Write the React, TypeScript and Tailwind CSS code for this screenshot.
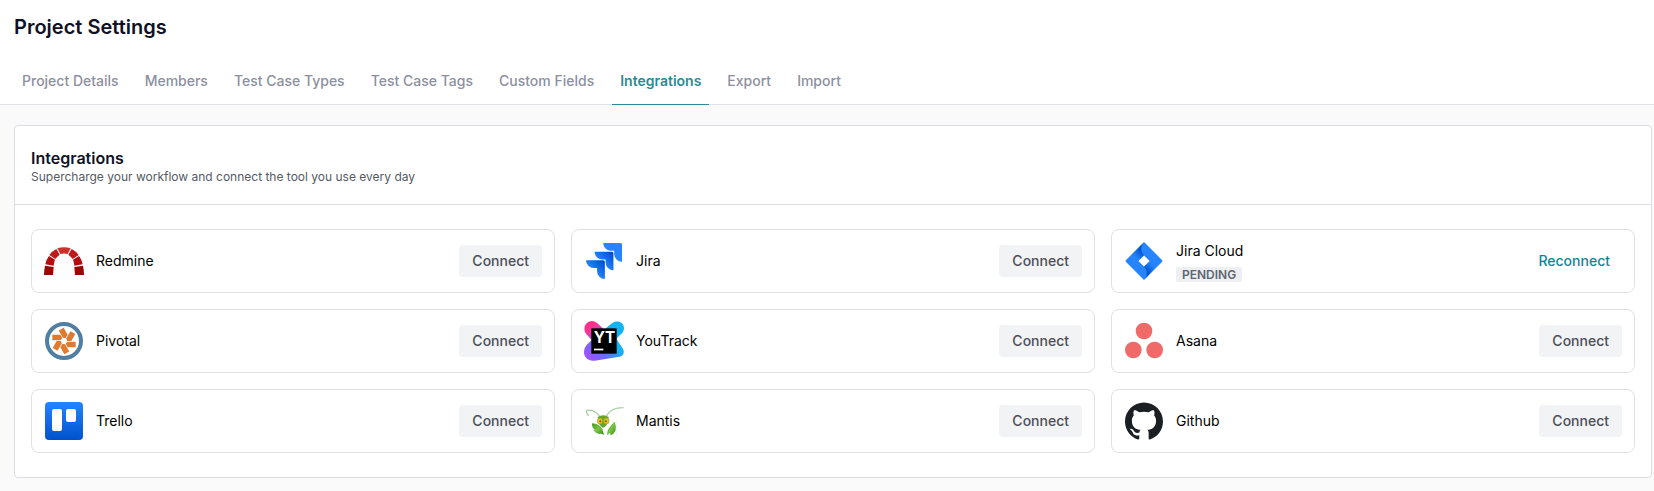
import { ReactNode } from "react";
import { SiGithub } from "react-icons/si";

const tabs = [
    "Project Details",
    "Members",
    "Test Case Types",
    "Test Case Tags",
    "Custom Fields",
    "Integrations",
    "Export",
    "Import",
];

const RedmineIcon = () => (
    <svg viewBox="0 0 120 120" className="size-10">
        <path fill="#cf2f2b" d="M40 22Q60 16 80 22L71 39Q60 36 49 39Z" />
        <path fill="#c11a1a" d="M37 24L47 41Q40 46 34 54L16 42Q25 30 37 24Z" />
        <path fill="#c11a1a" d="M83 24L73 41Q80 46 86 54L104 42Q95 30 83 24Z" />
        <path fill="#b30d0d" d="M15 45L33 56Q30 65 29 74L4 70Q7 55 15 45Z" />
        <path fill="#b30d0d" d="M105 45L87 56Q90 65 91 74L116 70Q113 55 105 45Z" />
        <path fill="#9c0303" d="M3 74L29 78Q28 90 27 102H0Q0 87 3 74Z" />
        <path fill="#9c0303" d="M117 74L91 78Q92 90 93 102H120Q120 87 117 74Z" />
    </svg>
);

const JiraIcon = () => (
    <svg viewBox="0 0 24 24" className="size-9">
        <defs>
            <linearGradient id="jira-mid" x1="0.95" y1="0.05" x2="0.4" y2="0.6">
                <stop offset="0.1" stopColor="#0052cc" />
                <stop offset="1" stopColor="#2684ff" />
            </linearGradient>
        </defs>
        <path
            fill="#2684ff"
            d="M23.013 0H11.455a5.215 5.215 0 0 0 5.215 5.215h2.129v2.057A5.215 5.215 0 0 0 24 12.483V1.005A1.001 1.001 0 0 0 23.013 0Z"
        />
        <path
            fill="url(#jira-mid)"
            d="M17.294 5.757H5.736a5.215 5.215 0 0 0 5.215 5.214h2.129v2.058a5.218 5.218 0 0 0 5.215 5.214V6.758a1.001 1.001 0 0 0-1.001-1.001z"
        />
        <path
            fill="url(#jira-mid)"
            d="M11.571 11.513H0a5.218 5.218 0 0 0 5.232 5.215h2.13v2.057A5.215 5.215 0 0 0 12.575 24V12.518a1.005 1.005 0 0 0-1.005-1.005z"
        />
    </svg>
);

const JiraCloudIcon = () => (
    <svg viewBox="0 0 24 24" className="size-[38px]">
        <defs>
            <linearGradient id="cloud-top" gradientUnits="userSpaceOnUse" x1="11.4" y1="4.5" x2="6.5" y2="9.5">
                <stop offset="0.18" stopColor="#0052cc" />
                <stop offset="1" stopColor="#2684ff" />
            </linearGradient>
            <linearGradient id="cloud-bottom" gradientUnits="userSpaceOnUse" x1="12.6" y1="19.5" x2="17.5" y2="14.5">
                <stop offset="0.18" stopColor="#0052cc" />
                <stop offset="1" stopColor="#2684ff" />
            </linearGradient>
        </defs>
        <path
            fill="#2684ff"
            d="M12.004 0L23.33 11.326a.95.95 0 0 1 0 1.344L12 24 .67 12.67a.95.95 0 0 1 0-1.344z"
        />
        <path
            fill="url(#cloud-top)"
            d="M12.004 0c-2.35 2.395-2.365 6.185.133 8.585L8.45 11.998 4.6 8.2z"
        />
        <path
            fill="url(#cloud-bottom)"
            d="M12 24c2.295-2.298 2.395-6.096-.08-8.533l3.63-3.469L19.4 15.8z"
        />
        <path fill="#ffffff" d="M12 8.45L15.55 12 12 15.55 8.45 12z" />
    </svg>
);

const PivotalIcon = () => (
    <svg viewBox="0 0 120 120" className="size-10">
        <circle cx="60" cy="60" r="51" fill="#ffffff" stroke="#517ea3" strokeWidth="12" />
        {[0, 60, 120, 180, 240, 300].map((angle) => (
            <path
                key={angle}
                fill="#e07a2e"
                d="M70 62H95V79H71L65 68Z"
                transform={`rotate(${angle} 60 60)`}
            />
        ))}
    </svg>
);

const YouTrackIcon = () => (
    <svg viewBox="0 0 120 120" className="size-10">
        <defs>
            <linearGradient id="yt-pink" x1="0.1" y1="0" x2="0.8" y2="1">
                <stop offset="0.3" stopColor="#ff318c" />
                <stop offset="1" stopColor="#8f57f5" />
            </linearGradient>
            <linearGradient id="yt-blue" gradientUnits="userSpaceOnUse" x1="15" y1="108" x2="90" y2="40">
                <stop offset="0" stopColor="#9b55fb" />
                <stop offset="0.35" stopColor="#6b6bfa" />
                <stop offset="0.8" stopColor="#12b3f3" />
            </linearGradient>
        </defs>
        <path
            fill="url(#yt-blue)"
            d="M84 7C99 -5 120 4 120 22C120 31 115 38 108 42L97 53L115 81C124 93 118 105 106 107L32 119C14 122 0 110 0 94C0 84 4 76 10 70L30 50Z"
        />
        <path fill="url(#yt-pink)" d="M40 7L62 27 40 62 24 58 6 38C-5 23 4 0 24 0C30 0 36 3 40 7Z" />
        <rect x="22" y="22" width="76" height="76" fill="#000000" />
        <text
            x="29"
            y="65"
            fill="#ffffff"
            fontSize="46"
            fontWeight="700"
            fontFamily="Inter, sans-serif"
        >
            YT
        </text>
        <rect x="30" y="83" width="28" height="5" fill="#ffffff" />
    </svg>
);

const AsanaIcon = () => (
    <svg viewBox="0 0 120 120" className="size-10" fill="#f06a6a">
        <circle cx="60" cy="30" r="25" />
        <circle cx="28" cy="87" r="25" />
        <circle cx="92" cy="87" r="25" />
    </svg>
);

const TrelloIcon = () => (
    <svg viewBox="0 0 38 38" className="size-[38px]">
        <defs>
            <linearGradient id="trello" x1="0" y1="0" x2="0" y2="1">
                <stop offset="0" stopColor="#2684ff" />
                <stop offset="1" stopColor="#0052cc" />
            </linearGradient>
        </defs>
        <rect width="38" height="38" rx="4" fill="url(#trello)" />
        <rect x="7" y="7" width="10" height="22" rx="2" fill="#ffffff" />
        <rect x="21" y="7" width="10" height="13" rx="2" fill="#ffffff" />
    </svg>
);

const MantisIcon = () => (
    <svg viewBox="0 0 120 120" className="size-10">
        <defs>
            <linearGradient id="mantis" x1="0" y1="0" x2="1" y2="1">
                <stop offset="0" stopColor="#3f9a26" />
                <stop offset="0.5" stopColor="#7cc444" />
                <stop offset="1" stopColor="#2f8a1d" />
            </linearGradient>
        </defs>
        <g fill="none" strokeLinecap="round">
            <path stroke="#a3cf9d" strokeWidth="4" d="M13 43Q3 31 10 28Q30 23 48 47" />
            <path stroke="#a9d3a4" strokeWidth="4" d="M67 46Q80 20 117 20" />
        </g>
        <path fill="#e2e2e2" d="M98 58H99V104H98ZM97 108H110V109H97Z" />
        <path fill="url(#mantis)" d="M24 67Q46 68 55 84L60 102Q50 96 46 99Q34 97 28 88L33 88Q23 80 24 67Z" />
        <path fill="url(#mantis)" d="M92 62Q97 74 95 86Q91 99 80 103L78 96L69 103Q67 84 92 62Z" />
        <path fill="#5fa52f" d="M41 48Q58 38 74 48L72 64Q65 80 57 80Q50 78 43 63Z" />
        <ellipse cx="48" cy="60" rx="8" ry="9" fill="#e6c51e" stroke="#94a01c" strokeWidth="2" />
        <ellipse cx="67" cy="60" rx="8" ry="9" fill="#e6c51e" stroke="#94a01c" strokeWidth="2" />
        <circle cx="49" cy="61" r="3" fill="#7a5a08" />
        <circle cx="66" cy="61" r="3" fill="#7a5a08" />
    </svg>
);

type Integration = {
    name: string;
    icon: ReactNode;
    pending?: boolean;
};

const integrations: Integration[] = [
    { name: "Redmine", icon: <RedmineIcon /> },
    { name: "Jira", icon: <JiraIcon /> },
    { name: "Jira Cloud", icon: <JiraCloudIcon />, pending: true },
    { name: "Pivotal", icon: <PivotalIcon /> },
    { name: "YouTrack", icon: <YouTrackIcon /> },
    { name: "Asana", icon: <AsanaIcon /> },
    { name: "Trello", icon: <TrelloIcon /> },
    { name: "Mantis", icon: <MantisIcon /> },
    { name: "Github", icon: <SiGithub className="size-[38px] text-[#1b1f23]" /> },
];

function IntegrationCard({ name, icon, pending }: Integration) {
    return (
        <li className="flex h-16 items-center gap-3 rounded-lg border border-[#dfe1e4] px-3">
            <div className="flex size-10 shrink-0 items-center justify-center">{icon}</div>
            <div className="flex flex-1 flex-col items-start gap-1.5">
                <p className="text-sm leading-5 text-black">{name}</p>
                {pending && (
                    <span className="rounded-xs bg-[#eeeff1] px-1.5 text-xs leading-[15px] font-semibold text-[#5f6570]">
                        PENDING
                    </span>
                )}
            </div>
            {pending ? (
                <button type="button" className="h-8 rounded px-3 text-sm font-medium text-[#0b8793]">
                    Reconnect
                </button>
            ) : (
                <button type="button" className="h-8 rounded bg-[#f2f3f5] px-[13px] text-sm font-medium text-[#4b4f58]">
                    Connect
                </button>
            )}
        </li>
    );
}

export default function App() {
    return (
        <div className="flex min-h-screen flex-col bg-[#fafafa] font-['Inter',sans-serif]">
            <header className="border-b border-[#dfe1e4] bg-white">
                <h1 className="px-3.5 pt-3 text-xl leading-[30px] font-semibold text-[#0f1225]">
                    Project Settings
                </h1>
                <nav className="mt-5 flex gap-2.5 px-3.5">
                    {tabs.map((tab) => (
                        <a
                            key={tab}
                            href="#"
                            className={
                                tab === "Integrations"
                                    ? "-mb-px h-[43px] border-b border-[#2b8a96] px-2 pt-[7px] text-sm leading-6 font-semibold text-[#2b8a96]"
                                    : "h-[42px] px-2 pt-[7px] text-sm leading-6 font-medium text-[#8c90a0]"
                            }
                        >
                            {tab}
                        </a>
                    ))}
                </nav>
            </header>

            <main className="pt-5 pr-0.5 pl-3.5">
                <section className="rounded border border-[#dadde1] bg-white">
                    <div className="border-b border-[#dadde1] px-4 pt-[22px] pb-[18px]">
                        <h2 className="text-base leading-5 font-semibold text-[#0f1225]">Integrations</h2>
                        <p className="text-xs leading-[18px] text-[#555a64]">
                            Supercharge your workflow and connect the tool you use every day
                        </p>
                    </div>
                    <ul className="grid grid-cols-3 gap-4 px-4 py-6">
                        {integrations.map((item) => (
                            <IntegrationCard key={item.name} {...item} />
                        ))}
                    </ul>
                </section>
            </main>
        </div>
    );
}
